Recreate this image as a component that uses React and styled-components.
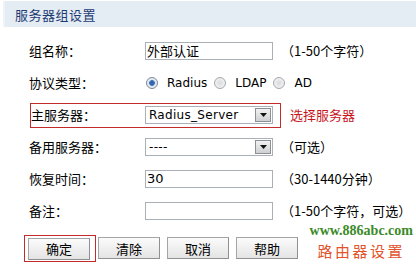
import React from 'react';
import styled, { createGlobalStyle, css } from 'styled-components';

const GlobalStyle = createGlobalStyle`
  html, body {
    margin: 0;
    padding: 0;
    background: #ffffff;
  }
  body {
    width: 416px;
    height: 266px;
    overflow: hidden;
    font-family: "Noto Sans CJK SC", "DejaVu Sans", sans-serif;
    font-size: 13px;
    color: #000000;
  }
`;

const Page = styled.div`
  position: relative;
  width: 416px;
  height: 266px;
  padding-top: 1px;
  padding-left: 3px;
  box-sizing: border-box;
`;

const TitleBar = styled.div`
  height: 26px;
  display: flex;
  align-items: center;
  padding-left: 10px;
  background: #e4ecf4;
  border-left: 2px solid #eff4f9;
  color: #1f3b73;
  font-size: 13px;
  letter-spacing: 0.5px;
`;

const Form = styled.div`
  margin-top: 8px;
  margin-left: -3px;
`;

const Row = styled.div`
  height: 32px;
  display: flex;
  align-items: center;
  padding-left: 29px;
`;

const Label = styled.div`
  width: ${p => p.$width || 116}px;
  flex-shrink: 0;
  line-height: 16px;
`;

const Frame = styled.div`
  display: flex;
  align-items: center;
  border: 1px solid #c42a2a;
  ${p =>
    p.$kind === 'row'
      ? css`
          height: 23px;
          margin-left: 1px;
          padding-right: 7px;
        `
      : css`
          margin-left: -5px;
          padding: 2px 5px 1px 3px;
        `}
`;

const TextInput = styled.div`
  width: 128px;
  height: 18px;
  box-sizing: border-box;
  border: 1px solid #a9b0b8;
  background: #ffffff;
  padding-left: 1px;
  line-height: 16px;
  font-size: 13px;
  font-family: ${p =>
    p.$latin ? '"DejaVu Sans", sans-serif' : '"Noto Sans CJK SC", sans-serif'};
`;

const Select = styled.div`
  width: 128px;
  height: 18px;
  box-sizing: border-box;
  border: 1px solid #a9b0b8;
  background: #ffffff;
  display: flex;
  align-items: center;
  justify-content: space-between;
  padding: 0 1px 0 3px;
  font-family: "DejaVu Sans", sans-serif;
  font-size: 12px;
  letter-spacing: 0.3px;
`;

const ArrowBox = styled.div`
  width: 16px;
  height: 14px;
  box-sizing: border-box;
  border: 1px solid #8c8f93;
  background: linear-gradient(#f2f2f2, #cfd0d2);
  display: flex;
  align-items: center;
  justify-content: center;
`;

const Hint = styled.div`
  margin-left: ${p => p.$gap || 8}px;
  color: ${p => (p.$red ? '#c8161d' : '#000000')};
  line-height: 16px;
  white-space: nowrap;
`;

const RadioGroup = styled.div`
  display: flex;
  align-items: center;
  margin-left: 1px;
  font-family: "DejaVu Sans", sans-serif;
  font-size: 12px;
`;

const RadioItem = styled.div`
  display: flex;
  align-items: center;
  margin-right: 7px;
`;

const RadioDot = styled.span`
  width: 12px;
  height: 12px;
  box-sizing: border-box;
  border-radius: 50%;
  border: 1px solid ${p => (p.$checked ? '#7a8794' : '#a3a7ab')};
  background: ${p =>
    p.$checked
      ? 'radial-gradient(circle, #2c5fa6 0, #3b70b8 2.5px, #dfe6ee 3.2px, #f4f6f8 100%)'
      : 'radial-gradient(circle, #d8dadc 0, #eceeef 60%, #f7f7f7 100%)'};
  margin-right: 9px;
`;

const ButtonRow = styled.div`
  height: 42px;
  display: flex;
  align-items: center;
  padding-left: 29px;
`;

const Button = styled.div`
  width: 62px;
  height: 22px;
  box-sizing: border-box;
  border: 1px solid #a3a6a9;
  border-right-color: #8e9194;
  border-bottom-color: #8e9194;
  background: linear-gradient(#fbfbfb, #e4e4e4);
  display: flex;
  align-items: center;
  justify-content: center;
  font-size: 13px;
  margin-left: ${p => p.$gap || 0}px;
`;

const Watermark = styled.div`
  position: absolute;
  right: 3px;
  bottom: 6px;
  display: flex;
  flex-direction: column;
  align-items: flex-end;
`;

const Site = styled.div`
  font-family: "Liberation Serif", serif;
  font-weight: bold;
  font-size: 14px;
  color: #3b8a2a;
  line-height: 16px;
`;

const Brand = styled.div`
  margin-top: 3px;
  margin-right: 8px;
  font-family: "Noto Sans CJK SC", sans-serif;
  font-size: 15px;
  letter-spacing: 2.5px;
  color: #e2542c;
  line-height: 18px;
`;

function Arrow() {
  return (
    <ArrowBox>
      <svg width="7" height="4" viewBox="0 0 7 4">
        <polygon points="0,0 7,0 3.5,4" fill="#111" />
      </svg>
    </ArrowBox>
  );
}

function Radio({ checked, children }) {
  return (
    <RadioItem>
      <RadioDot $checked={checked} />
      {children}
    </RadioItem>
  );
}

export default function App() {
  return (
    <>
      <GlobalStyle />
      <Page>
        <TitleBar>服务器组设置</TitleBar>
        <Form>
          <Row>
            <Label>组名称：</Label>
            <TextInput>外部认证</TextInput>
            <Hint>（1-50个字符）</Hint>
          </Row>
          <Row>
            <Label>协议类型：</Label>
            <RadioGroup>
              <Radio checked>Radius</Radio>
              <Radio>LDAP</Radio>
              <Radio>AD</Radio>
            </RadioGroup>
          </Row>
          <Row>
            <Frame $kind="row">
              <Label $width={114}>主服务器：</Label>
              <Select>
                <span>Radius_Server</span>
                <Arrow />
              </Select>
            </Frame>
            <Hint $red $gap={9}>选择服务器</Hint>
          </Row>
          <Row>
            <Label>备用服务器：</Label>
            <Select>
              <span>----</span>
              <Arrow />
            </Select>
            <Hint>（可选）</Hint>
          </Row>
          <Row>
            <Label>恢复时间：</Label>
            <TextInput $latin>30</TextInput>
            <Hint>（30-1440分钟）</Hint>
          </Row>
          <Row>
            <Label>备注：</Label>
            <TextInput />
            <Hint>（1-50个字符，可选）</Hint>
          </Row>
          <ButtonRow>
            <Frame>
              <Button>确定</Button>
            </Frame>
            <Button $gap={2}>清除</Button>
            <Button $gap={7}>取消</Button>
            <Button $gap={7}>帮助</Button>
          </ButtonRow>
        </Form>
        <Watermark>
          <Site>www.886abc.com</Site>
          <Brand>路由器设置</Brand>
        </Watermark>
      </Page>
    </>
  );
}
